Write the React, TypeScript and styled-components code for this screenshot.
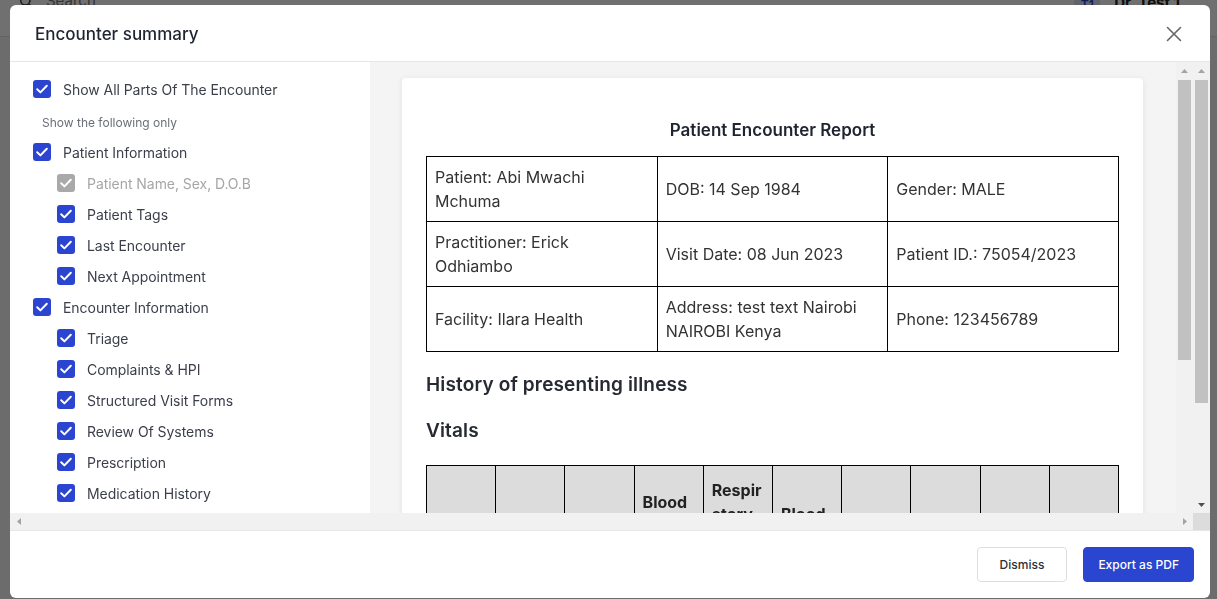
import React from "react";
import styled, { createGlobalStyle } from "styled-components";

const Global = createGlobalStyle`
  html, body { margin: 0; padding: 0; height: 100%; }
  body { font-family: Inter, "Noto Sans", sans-serif; background: #f5f6f8; overflow: hidden; }
  * { box-sizing: border-box; }
`;

/* ---------- page behind the dialog ---------- */

const Page = styled.div`
  height: 100vh;
  display: flex;
  flex-direction: column;
`;

const TopBar = styled.div`
  height: 37px;
  background: #fff;
  border-bottom: 1px solid #e2e2e2;
  display: flex;
  align-items: flex-start;
  justify-content: space-between;
  padding: 0 37px 0 18px;
`;

const SearchBox = styled.div`
  display: flex;
  align-items: center;
  gap: 12px;
  margin-top: -9px;
  color: #777;
  font-size: 15px;
`;

const UserBox = styled.div`
  display: flex;
  align-items: center;
  gap: 14px;
  margin-top: -10px;
  font-size: 15px;
  font-weight: 700;
  color: #222;
`;

const Avatar = styled.div`
  width: 26px;
  height: 24px;
  border-radius: 4px;
  background: #dde2fb;
  color: #2a45d0;
  font-size: 12px;
  font-weight: 600;
  display: flex;
  align-items: flex-end;
  justify-content: center;
  padding-bottom: 2px;
`;

const Overlay = styled.div`
  position: fixed;
  inset: 0;
  background: rgba(0, 0, 0, 0.56);
`;

/* ---------- dialog ---------- */

const Modal = styled.div`
  position: fixed;
  top: 5px;
  left: 10px;
  width: 1200px;
  height: 593px;
  background: #fff;
  border-radius: 6px;
  display: flex;
  flex-direction: column;
  overflow: hidden;
`;

const Header = styled.div`
  height: 57px;
  flex: none;
  display: flex;
  align-items: center;
  justify-content: space-between;
  padding: 2px 27px 0 25px;
  border-bottom: 1px solid #e6e6e6;
`;

const Title = styled.h2`
  margin: 0;
  font-size: 17px;
  font-weight: 500;
  color: #1f2430;
`;

const CloseButton = styled.button`
  border: none;
  background: none;
  padding: 0;
  width: 18px;
  height: 18px;
  display: flex;
  align-items: center;
  justify-content: center;
  cursor: pointer;
`;

/* scroll frame: viewport + drawn classic scrollbars */
const Body = styled.div`
  flex: 1;
  min-height: 0;
  display: grid;
  grid-template-columns: 1fr 17px;
  grid-template-rows: 1fr 17px;
`;

const Viewport = styled.div`
  overflow: hidden;
  min-height: 0;
`;

const ScrollBar = styled.div<{ $horizontal?: boolean }>`
  display: flex;
  flex-direction: ${(p) => (p.$horizontal ? "row" : "column")};
  background: #f1f1f1;
  min-height: 0;
  overflow: hidden;
`;

const ArrowButton = styled.div`
  width: 17px;
  height: 17px;
  flex: none;
  display: flex;
  align-items: center;
  justify-content: center;
`;

const Thumb = styled.div<{ $length: number }>`
  flex: none;
  height: ${(p) => p.$length}px;
  margin: 1px 2px 0;
  background: #c1c1c1;
`;

const TrackRest = styled.div`
  flex: 1;
`;

const Corner = styled.div`
  background: #dcdcdc;
`;

const Arrow = ({ dir, dark }: { dir: "up" | "down" | "left" | "right"; dark?: boolean }) => {
  const pts = {
    up: "0,4 3.5,0 7,4",
    down: "0,0 7,0 3.5,4",
    left: "4,0 4,7 0,3.5",
    right: "0,0 0,7 4,3.5",
  }[dir];
  const vertical = dir === "up" || dir === "down";
  return (
    <ArrowButton>
      <svg width={vertical ? 7 : 4} height={vertical ? 4 : 7} viewBox={vertical ? "0 0 7 4" : "0 0 4 7"}>
        <polygon points={pts} fill={dark ? "#505050" : "#a3a3a3"} />
      </svg>
    </ArrowButton>
  );
};

const Split = styled.div`
  display: flex;
  height: 612px;
`;

const Sidebar = styled.div`
  width: 360px;
  flex: none;
  padding: 18px 0 0 23px;
  display: flex;
  flex-direction: column;
  overflow: hidden;
`;

const Row = styled.label<{ $indent?: boolean; $disabled?: boolean }>`
  display: flex;
  align-items: center;
  gap: 12px;
  height: 18px;
  flex: none;
  margin-bottom: 13px;
  padding-left: ${(p) => (p.$indent ? "24px" : "0")};
  font-size: 14px;
  letter-spacing: -0.05px;
  color: ${(p) => (p.$disabled ? "#a6a6a6" : "#3b3f4a")};
`;

const Box = styled.span<{ $disabled?: boolean }>`
  width: 18px;
  height: 18px;
  flex: none;
  border-radius: 3px;
  background: ${(p) => (p.$disabled ? "#a9a9a9" : "#2b45d0")};
  display: flex;
  align-items: center;
  justify-content: center;
`;

const SubLabel = styled.div`
  font-size: 12px;
  color: #6b6f78;
  padding-left: 9px;
  margin: 4px 0 12px;
  line-height: 16px;
`;

const Preview = styled.div`
  flex: 1;
  min-width: 0;
  height: 100%;
  background: #f4f4f4;
  display: grid;
  grid-template-columns: 1fr 17px;
`;

const PreviewContent = styled.div`
  overflow: hidden;
  padding: 16px 33px 16px 32px;
`;

const Paper = styled.div`
  background: #fff;
  border-radius: 4px;
  box-shadow: 0 1px 6px rgba(0, 0, 0, 0.08);
  padding: 40px 24px 60px;
`;

const ReportTitle = styled.div`
  text-align: center;
  font-size: 17px;
  font-weight: 600;
  line-height: 24px;
  color: #1f2430;
  margin-bottom: 14px;
`;

const InfoTable = styled.table`
  width: 100%;
  border-collapse: collapse;
  table-layout: fixed;
  td {
    border: 1px solid #000;
    height: 65px;
    padding: 8px;
    font-size: 16px;
    line-height: 24px;
    color: #333;
    vertical-align: middle;
  }
`;

const Section = styled.h3`
  margin: 20px 0 0;
  font-size: 19px;
  font-weight: 600;
  letter-spacing: 0.15px;
  line-height: 26px;
  color: #272a33;
`;

const VitalsTable = styled.table`
  width: 100%;
  margin-top: 21px;
  border-collapse: collapse;
  table-layout: fixed;
  th {
    border: 1px solid #000;
    background: #dcdcdc;
    padding: 12px 8px;
    font-size: 16px;
    font-weight: 700;
    line-height: 24px;
    color: #222;
    text-align: left;
    vertical-align: middle;
    overflow-wrap: anywhere;
  }
  td {
    border: 1px solid #000;
    padding: 8px;
    font-size: 16px;
    height: 40px;
  }
`;

const Footer = styled.div`
  height: 68px;
  flex: none;
  border-top: 1px solid #e6e6e6;
  display: flex;
  align-items: center;
  justify-content: flex-end;
  gap: 16px;
  padding: 0 16px 0 0;
`;

const Button = styled.button<{ $primary?: boolean }>`
  height: 35px;
  padding: 0 ${(p) => (p.$primary ? "14px" : "22px")};
  border-radius: 4px;
  font-family: Inter, sans-serif;
  font-size: 12px;
  font-weight: 500;
  cursor: pointer;
  border: 1px solid ${(p) => (p.$primary ? "#2a45d0" : "#dedede")};
  background: ${(p) => (p.$primary ? "#2a45d0" : "#fff")};
  color: ${(p) => (p.$primary ? "#fff" : "#2b2f3a")};
`;

const Check = () => (
  <svg width="14" height="14" viewBox="0 0 14 14" fill="none">
    <path d="M2.2 7.3 L5.4 10.4 L11.8 3.8" stroke="#fff" strokeWidth="2" strokeLinecap="round" strokeLinejoin="round" />
  </svg>
);

type Item = { label: string; indent?: boolean; disabled?: boolean };

const patientItems: Item[] = [
  { label: "Patient Information" },
  { label: "Patient Name, Sex, D.O.B", indent: true, disabled: true },
  { label: "Patient Tags", indent: true },
  { label: "Last Encounter", indent: true },
  { label: "Next Appointment", indent: true },
  { label: "Encounter Information" },
  { label: "Triage", indent: true },
  { label: "Complaints & HPI", indent: true },
  { label: "Structured Visit Forms", indent: true },
  { label: "Review Of Systems", indent: true },
  { label: "Prescription", indent: true },
  { label: "Medication History", indent: true },
  { label: "Diagnosis", indent: true },
  { label: "Lab Investigations", indent: true },
  { label: "Treatment Plan", indent: true },
];

const CheckRow = ({ label, indent, disabled }: Item) => (
  <Row $indent={indent} $disabled={disabled}>
    <Box $disabled={disabled}>
      <Check />
    </Box>
    {label}
  </Row>
);

const info = [
  ["Patient: Abi Mwachi Mchuma", "DOB: 14 Sep 1984", "Gender: MALE"],
  ["Practitioner: Erick Odhiambo", "Visit Date: 08 Jun 2023", "Patient ID.: 75054/2023"],
  ["Facility: Ilara Health", "Address: test text Nairobi NAIROBI Kenya", "Phone: 123456789"],
];

const vitals = [
  "Date",
  "Time",
  "Temp",
  "Blood Pressure",
  "Respiratory Rate (bpm)",
  "Blood Sugar",
  "Pulse",
  "BMI",
  "SpO2",
  "MUAC",
];

export default function App() {
  return (
    <>
      <Global />
      <Page>
        <TopBar>
          <SearchBox>
            <svg width="16" height="16" viewBox="0 0 24 24" fill="none" stroke="#444" strokeWidth="2.4">
              <circle cx="11" cy="11" r="7" />
              <path d="M16.5 16.5 L21 21" />
            </svg>
            Search
          </SearchBox>
          <UserBox>
            <Avatar>T1</Avatar>
            Dr. Test 1
          </UserBox>
        </TopBar>
      </Page>
      <Overlay />
      <Modal role="dialog">
        <Header>
          <Title>Encounter summary</Title>
          <CloseButton aria-label="Close">
            <svg width="16" height="16" viewBox="0 0 16 16" fill="none" stroke="#666" strokeWidth="1.6" strokeLinecap="round">
              <path d="M1.5 1.5 L14.5 14.5 M14.5 1.5 L1.5 14.5" />
            </svg>
          </CloseButton>
        </Header>
        <Body>
          <Viewport>
            <Split>
              <Sidebar>
                <CheckRow label="Show All Parts Of The Encounter" />
                <SubLabel>Show the following only</SubLabel>
                {patientItems.map((it) => (
                  <CheckRow key={it.label} {...it} />
                ))}
              </Sidebar>
              <Preview>
                <PreviewContent>
                  <Paper>
                    <ReportTitle>Patient Encounter Report</ReportTitle>
                    <InfoTable>
                      <tbody>
                        {info.map((r, i) => (
                          <tr key={i}>
                            {r.map((c) => (
                              <td key={c}>{c}</td>
                            ))}
                          </tr>
                        ))}
                      </tbody>
                    </InfoTable>
                    <Section>History of presenting illness</Section>
                    <Section>Vitals</Section>
                    <VitalsTable>
                      <thead>
                        <tr>
                          {vitals.map((v) => (
                            <th key={v}>{v}</th>
                          ))}
                        </tr>
                      </thead>
                      <tbody>
                        <tr>
                          {vitals.map((v) => (
                            <td key={v}>-</td>
                          ))}
                        </tr>
                      </tbody>
                    </VitalsTable>
                    <Section>Diagnosis</Section>
                    <Section>Prescription</Section>
                  </Paper>
                </PreviewContent>
                <ScrollBar>
                  <Arrow dir="up" />
                  <Thumb $length={280} />
                  <TrackRest />
                  <Arrow dir="down" dark />
                </ScrollBar>
              </Preview>
            </Split>
          </Viewport>
          <ScrollBar>
            <Arrow dir="up" />
            <Thumb $length={323} />
            <TrackRest />
            <Arrow dir="down" dark />
          </ScrollBar>
          <ScrollBar $horizontal>
            <Arrow dir="left" />
            <TrackRest />
            <Arrow dir="right" />
          </ScrollBar>
          <Corner />
        </Body>
        <Footer>
          <Button>Dismiss</Button>
          <Button $primary>Export as PDF</Button>
        </Footer>
      </Modal>
    </>
  );
}
